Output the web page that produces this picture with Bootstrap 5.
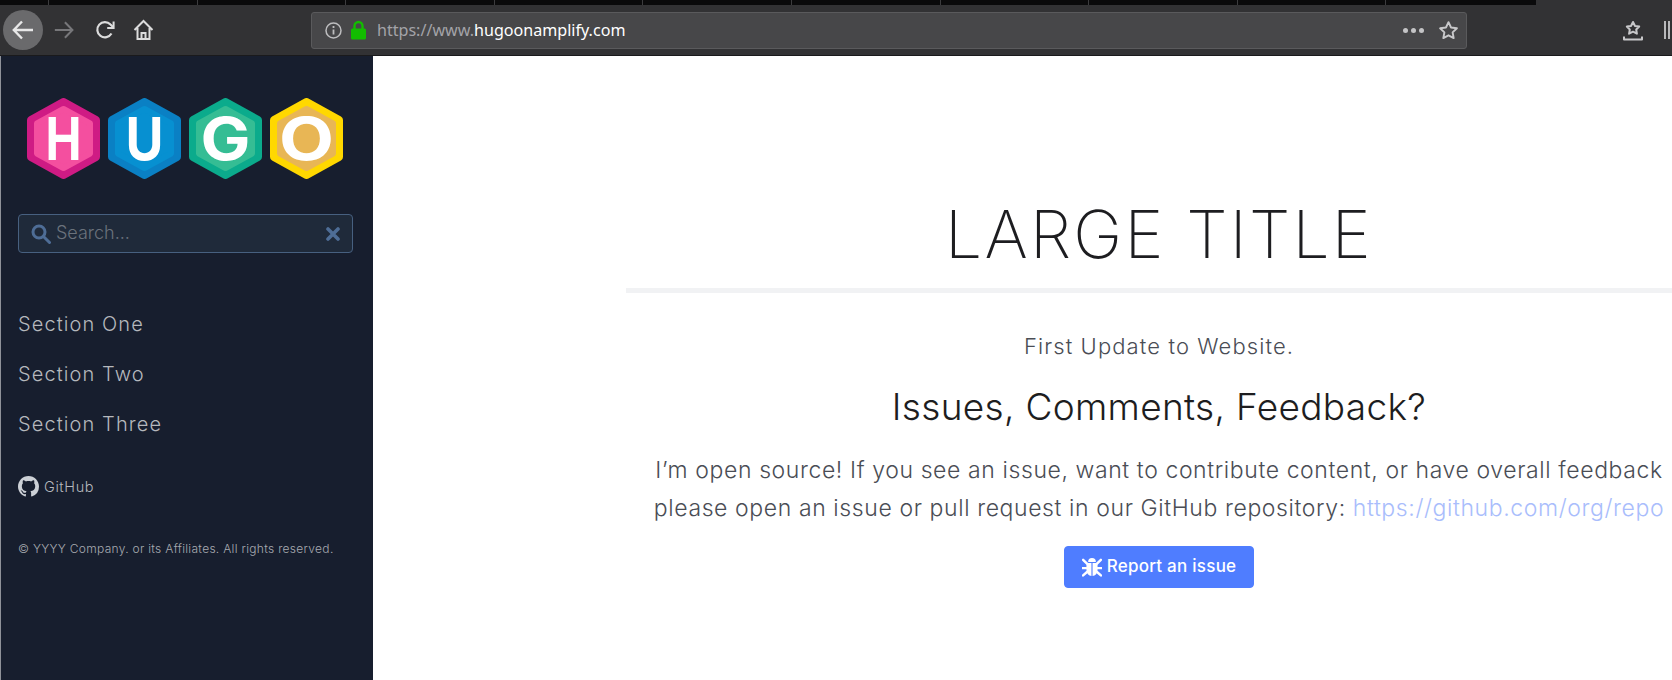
<!DOCTYPE html>
<html lang="en">
<head>
  <meta charset="UTF-8" />
  <meta name="viewport" content="width=device-width, initial-scale=1.0"/>
  <title>Hugo on Amplify</title>
  <link href="https://cdn.jsdelivr.net/npm/bootstrap@5.3.2/dist/css/bootstrap.min.css" rel="stylesheet" />

  <style>
    body {
      height: 680px;
      overflow: hidden;
      font-family: Inter, "Liberation Sans", sans-serif;
      font-weight: 300;
      background: #fff;
    }

    /* browser chrome */
    .tab-strip {
      height: 5px;
      background: #323234;
    }
    .tab-strip-inner {
      width: 1536px;
      padding-left: 48px;
      background: #0a0a0b;
    }
    .tab-tick {
      flex: 0 0 148.6px;
      border-left: 1px solid #3c3c3e;
    }
    .browser-bar {
      height: 51px;
      padding-left: 3px;
      background: #323234;
      border-bottom: 1px solid #1a1a1c;
    }
    .back-btn {
      width: 40px;
      height: 40px;
      background: #6a6a6c;
    }
    .bar-icon {
      flex: none;
      display: block;
    }
    .forward-icon { margin-left: 10px; }
    .reload-icon { margin-left: 20px; }
    .home-icon { margin-left: 18px; }
    .url-box {
      width: 1158px;
      height: 37px;
      margin-left: 157px;
      padding: 0 7px 0 13px;
      background: #474749;
      border: 1px solid #5a5a5c;
      border-radius: 3px;
      font-family: "Noto Sans", "Liberation Sans", sans-serif;
      font-weight: 400;
      font-size: 16.1px;
    }
    .url-scheme { color: #a3a3a8; margin-left: 10px; }
    .url-host { color: #fff; }
    .more-dots {
      width: 21px;
      margin-right: 14px;
    }
    .more-dots i {
      width: 5px;
      height: 5px;
      border-radius: 50%;
      background: #c4c4c6;
    }
    .bar-end {
      margin-left: 156px;
    }
    .bar-lines {
      margin-left: 21px;
    }

    /* sidebar */
    .page-shell {
      height: 624px;
    }
    .side-panel {
      flex: 0 0 373px;
      padding: 42px 20px 0 17px;
      background: #171e2e;
      border-left: 1px solid #8f9299;
      color: #b5b8bd;
    }
    .logo-row {
      gap: 8px;
      padding-left: 9px;
    }
    .logo-letter {
      font-family: Inter, "Liberation Sans", sans-serif;
      font-weight: 700;
      font-size: 59px;
      fill: #fff;
      text-anchor: middle;
    }
    .search-box {
      height: 39px;
      margin-top: 35px;
      padding: 0 12px 0 12px;
      background: #1f2a3a;
      border: 1px solid #476080;
      border-radius: 4px;
    }
    .search-input {
      padding: 0 0 2px 5px;
      height: 30px;
      background: transparent;
      border: 0;
      box-shadow: none;
      color: #fff;
      font-size: 18px;
      font-weight: 300;
    }
    .search-input::placeholder {
      color: #6b727c;
    }
    .section-nav {
      margin-top: 46px;
    }
    .section-nav .nav-link {
      height: 50px;
      padding: 0;
      line-height: 50px;
      color: #b5b8bd;
      font-size: 20px;
      font-weight: 300;
      letter-spacing: 1.1px;
    }
    .github-row {
      margin-top: 27px;
      gap: 5px;
      color: #b5b8bd;
      font-size: 14.5px;
      letter-spacing: 0.6px;
      text-decoration: none;
    }
    .legal-line {
      margin: 42px 0 0;
      font-size: 12px;
      font-weight: 300;
      letter-spacing: .3px;
      color: #a8abb1;
      white-space: nowrap;
    }

    /* main column runs past the window edge, same as the capture */
    .main-col {
      flex: 0 0 1066px;
      margin-left: 253px;
      padding-top: 136px;
      text-align: center;
    }
    .big-title {
      margin: 0;
      font-size: 66px;
      line-height: 84px;
      font-weight: 200;
      letter-spacing: 2.2px;
      color: #1d1d20;
    }
    .title-rule {
      height: 5px;
      margin: 12px 0 38px;
      background: #f1f2f4;
      border: 0;
      opacity: 1;
    }
    .update-line {
      margin: 0;
      font-size: 22px;
      line-height: 30px;
      color: #4a4d55;
      letter-spacing: 1.1px;
    }
    .issues-title {
      margin: 23px 0 21px;
      font-size: 37px;
      line-height: 46px;
      font-weight: 300;
      letter-spacing: .33px;
      color: #1d1d20;
    }
    .issues-text {
      margin: 0 0 19px;
      font-size: 23px;
      line-height: 38px;
      letter-spacing: .6px;
      color: #4a4d55;
      white-space: nowrap;
    }
    .issues-text a {
      color: #a9bdfc;
      text-decoration: none;
    }
    .report-btn {
      width: 190px;
      height: 42px;
      padding: 0;
      gap: 5px;
      background: #4f7dff;
      border-color: #4f7dff;
      border-radius: 4px;
      font-size: 17px;
      font-weight: 500;
      letter-spacing: .25px;
    }
  </style>
</head>
<body>

<!-- browser chrome -->
<div class="tab-strip d-flex">
  <div class="tab-strip-inner d-flex">
    <span class="tab-tick"></span><span class="tab-tick"></span><span class="tab-tick"></span>
    <span class="tab-tick"></span><span class="tab-tick"></span><span class="tab-tick"></span>
    <span class="tab-tick"></span><span class="tab-tick"></span><span class="tab-tick"></span>
    <span class="tab-tick"></span>
  </div>
</div>
<div class="browser-bar d-flex align-items-center">
  <div class="back-btn rounded-circle d-flex align-items-center justify-content-center flex-none">
    <svg width="24" height="24" viewBox="0 0 24 24" fill="none" stroke="#e8e8e8" stroke-width="2.4"><path d="M22 12H3M11 3.5 2.8 12l8.2 8.5"/></svg>
  </div>
  <svg class="bar-icon forward-icon" width="22" height="22" viewBox="0 0 24 24" fill="none" stroke="#77777a" stroke-width="2.2"><path d="M2 12h19M13 3.5l8.2 8.5-8.2 8.5"/></svg>
  <svg class="bar-icon reload-icon" width="20" height="20" viewBox="0 0 20 20" fill="none" stroke="#dcdcdc" stroke-width="2.2"><path d="M16.5 13.5A7.6 7.6 0 1 1 15.5 4.5L18 7"/><path d="M18.6 1.5v6.6h-6.4" stroke-width="2"/></svg>
  <svg class="bar-icon home-icon" width="21" height="22" viewBox="0 0 21 22" fill="none" stroke="#dcdcdc" stroke-width="2"><path d="M1.5 11 10.5 2l9 9M4.5 9v11h12V9"/><path d="M8.5 20v-6h4v6"/></svg>
  <div class="url-box d-flex align-items-center">
    <svg class="bar-icon" width="17" height="17" viewBox="0 0 17 17" fill="none" stroke="#bdbdbf" stroke-width="1.5"><circle cx="8.5" cy="8.5" r="7.5"/><path d="M8.5 7.5v5M8.5 4v2" stroke-width="1.8"/></svg>
    <svg class="bar-icon ms-2" width="17" height="20" viewBox="0 0 17 20"><path d="M4.5 9V6a4 4 0 0 1 8 0v3" fill="none" stroke="#12bc00" stroke-width="2.4"/><rect x="1" y="8.5" width="15" height="11" rx="1.5" fill="#12bc00"/></svg>
    <span class="url-scheme">https://www.<span class="url-host">hugoonamplify.com</span></span>
    <div class="more-dots d-flex justify-content-between ms-auto"><i></i><i></i><i></i></div>
    <svg class="bar-icon" width="21" height="21" viewBox="0 0 24 24" fill="none" stroke="#c8c8ca" stroke-width="2.2" stroke-linejoin="round"><path d="m12 2.5 2.9 6.1 6.7.9-4.9 4.6 1.2 6.6-5.9-3.2-5.9 3.2 1.2-6.6-4.9-4.6 6.7-.9z"/></svg>
  </div>
  <svg class="bar-icon bar-end" width="20" height="21" viewBox="0 0 20 21" fill="none" stroke="#c8c8ca" stroke-width="2" stroke-linejoin="round"><path d="m10 2 2 4 4.2.6-3 2.9.7 4.2-3.9-2-3.9 2 .7-4.2-3-2.9L8 6z"/><path d="M1 16.5V19.5H19V16.5"/></svg>
  <svg class="bar-icon bar-lines" width="8" height="20" viewBox="0 0 8 20" fill="none" stroke="#b8b8ba" stroke-width="2"><path d="M1 1v18M5 1v18"/></svg>
</div>

<div class="page-shell d-flex">
  <!-- sidebar -->
  <aside class="side-panel">
    <div class="logo-row d-flex">
      <svg width="73" height="81" viewBox="0 0 73 81" role="img" aria-label="H">
        <path d="M36.5 4 69 22v37L36.5 77 4 59V22z" fill="#cf1b84" stroke="#cf1b84" stroke-width="8" stroke-linejoin="round"/>
        <path d="M36.5 11 63 25.500v30L36.5 70 10 55.500v-30z" fill="#f44f9f" stroke="#f44f9f" stroke-width="6" stroke-linejoin="round"/>
        <text class="logo-letter" x="36.500" y="62" textLength="36" lengthAdjust="spacingAndGlyphs">H</text>
      </svg>
      <svg width="73" height="81" viewBox="0 0 73 81" role="img" aria-label="U">
        <path d="M36.5 4 69 22v37L36.5 77 4 59V22z" fill="#0a80c4" stroke="#0a80c4" stroke-width="8" stroke-linejoin="round"/>
        <path d="M36.5 11 63 25.500v30L36.5 70 10 55.500v-30z" fill="#0790d1" stroke="#0790d1" stroke-width="6" stroke-linejoin="round"/>
        <text class="logo-letter" x="36.500" y="62" textLength="38" lengthAdjust="spacingAndGlyphs">U</text>
      </svg>
      <svg width="73" height="81" viewBox="0 0 73 81" role="img" aria-label="G">
        <path d="M36.5 4 69 22v37L36.5 77 4 59V22z" fill="#0bab8c" stroke="#0bab8c" stroke-width="8" stroke-linejoin="round"/>
        <path d="M36.5 11 63 25.500v30L36.5 70 10 55.500v-30z" fill="#35bd94" stroke="#35bd94" stroke-width="6" stroke-linejoin="round"/>
        <text class="logo-letter" x="36.500" y="62" textLength="50" lengthAdjust="spacingAndGlyphs">G</text>
      </svg>
      <svg width="73" height="81" viewBox="0 0 73 81" role="img" aria-label="O">
        <path d="M36.5 4 69 22v37L36.5 77 4 59V22z" fill="#ffd800" stroke="#ffd800" stroke-width="8" stroke-linejoin="round"/>
        <path d="M36.5 11 63 25.500v30L36.5 70 10 55.500v-30z" fill="#e8b655" stroke="#e8b655" stroke-width="6" stroke-linejoin="round"/>
        <text class="logo-letter" x="36.500" y="62" textLength="55" lengthAdjust="spacingAndGlyphs">O</text>
      </svg>
    </div>

    <div class="search-box d-flex align-items-center">
      <svg class="bar-icon" width="20" height="20" viewBox="0 0 20 20" fill="none" stroke="#4e6d96" stroke-width="3"><circle cx="8" cy="8" r="6"/><path d="m12.500 12.500 6 6" stroke-linecap="round"/></svg>
      <input class="form-control search-input" type="text" placeholder="Search...">
      <svg class="bar-icon" width="14" height="14" viewBox="0 0 14 14" fill="none" stroke="#4e6d96" stroke-width="3.6"><path d="m2 2 10 10M12 2 2 12" stroke-linecap="round"/></svg>
    </div>

    <nav class="nav flex-column section-nav">
      <a class="nav-link" href="#">Section One</a>
      <a class="nav-link" href="#">Section Two</a>
      <a class="nav-link" href="#">Section Three</a>
    </nav>

    <a class="github-row d-flex align-items-center" href="#">
      <svg width="21" height="21" viewBox="0 0 16 16" fill="#ccd0d6"><path d="M8 0C3.58 0 0 3.58 0 8c0 3.54 2.29 6.53 5.47 7.59.4.07.55-.17.55-.38 0-.19-.01-.82-.01-1.49-2.01.37-2.53-.49-2.69-.94-.09-.23-.48-.94-.82-1.13-.28-.15-.68-.52-.01-.53.63-.01 1.08.58 1.23.82.72 1.21 1.87.87 2.33.66.07-.52.28-.87.51-1.07-1.78-.2-3.64-.89-3.64-3.95 0-.87.31-1.59.82-2.15-.08-.2-.36-1.02.08-2.12 0 0 .67-.21 2.2.82.64-.18 1.32-.27 2-.27.68 0 1.36.09 2 .27 1.53-1.04 2.2-.82 2.2-.82.44 1.1.16 1.92.08 2.12.51.56.82 1.27.82 2.15 0 3.07-1.87 3.75-3.65 3.95.29.25.54.73.54 1.48 0 1.07-.01 1.93-.01 2.2 0 .21.15.46.55.38A8.012 8.012 0 0 0 16 8c0-4.42-3.58-8-8-8z"/></svg>
      <span>GitHub</span>
    </a>

    <p class="legal-line">© YYYY Company. or its Affiliates. All rights reserved.</p>
  </aside>

  <!-- main content -->
  <main class="main-col">
    <h1 class="big-title">LARGE TITLE</h1>
    <hr class="title-rule">
    <p class="update-line">First Update to Website.</p>
    <h2 class="issues-title">Issues, Comments, Feedback?</h2>
    <p class="issues-text">I’m open source! If you see an issue, want to contribute content, or have overall feedback<br>please open an issue or pull request in our GitHub repository: <a href="#">https://github.com/org/repo</a></p>
    <a class="btn btn-primary report-btn d-inline-flex align-items-center justify-content-center" href="#">
      <svg width="20" height="20" viewBox="0 0 18 18" fill="#fff"><path d="M5.500 4.500a3.500 3.500 0 0 1 7 0z"/><path d="M4 5.500h4.500V17A4.500 5 0 0 1 4 12zM9.500 5.500H14V12a4.500 5 0 0 1-4.500 5z"/><path d="M1 2.500l3.500 3.500M17 2.500 13.500 6M.5 10h3.500M14 10h3.500M1 16.500l3.500-3M17 16.500l-3.500-3" stroke="#fff" stroke-width="2.200" stroke-linecap="round"/></svg>
      <span>Report an issue</span>
    </a>
  </main>
</div>

</body>
</html>
